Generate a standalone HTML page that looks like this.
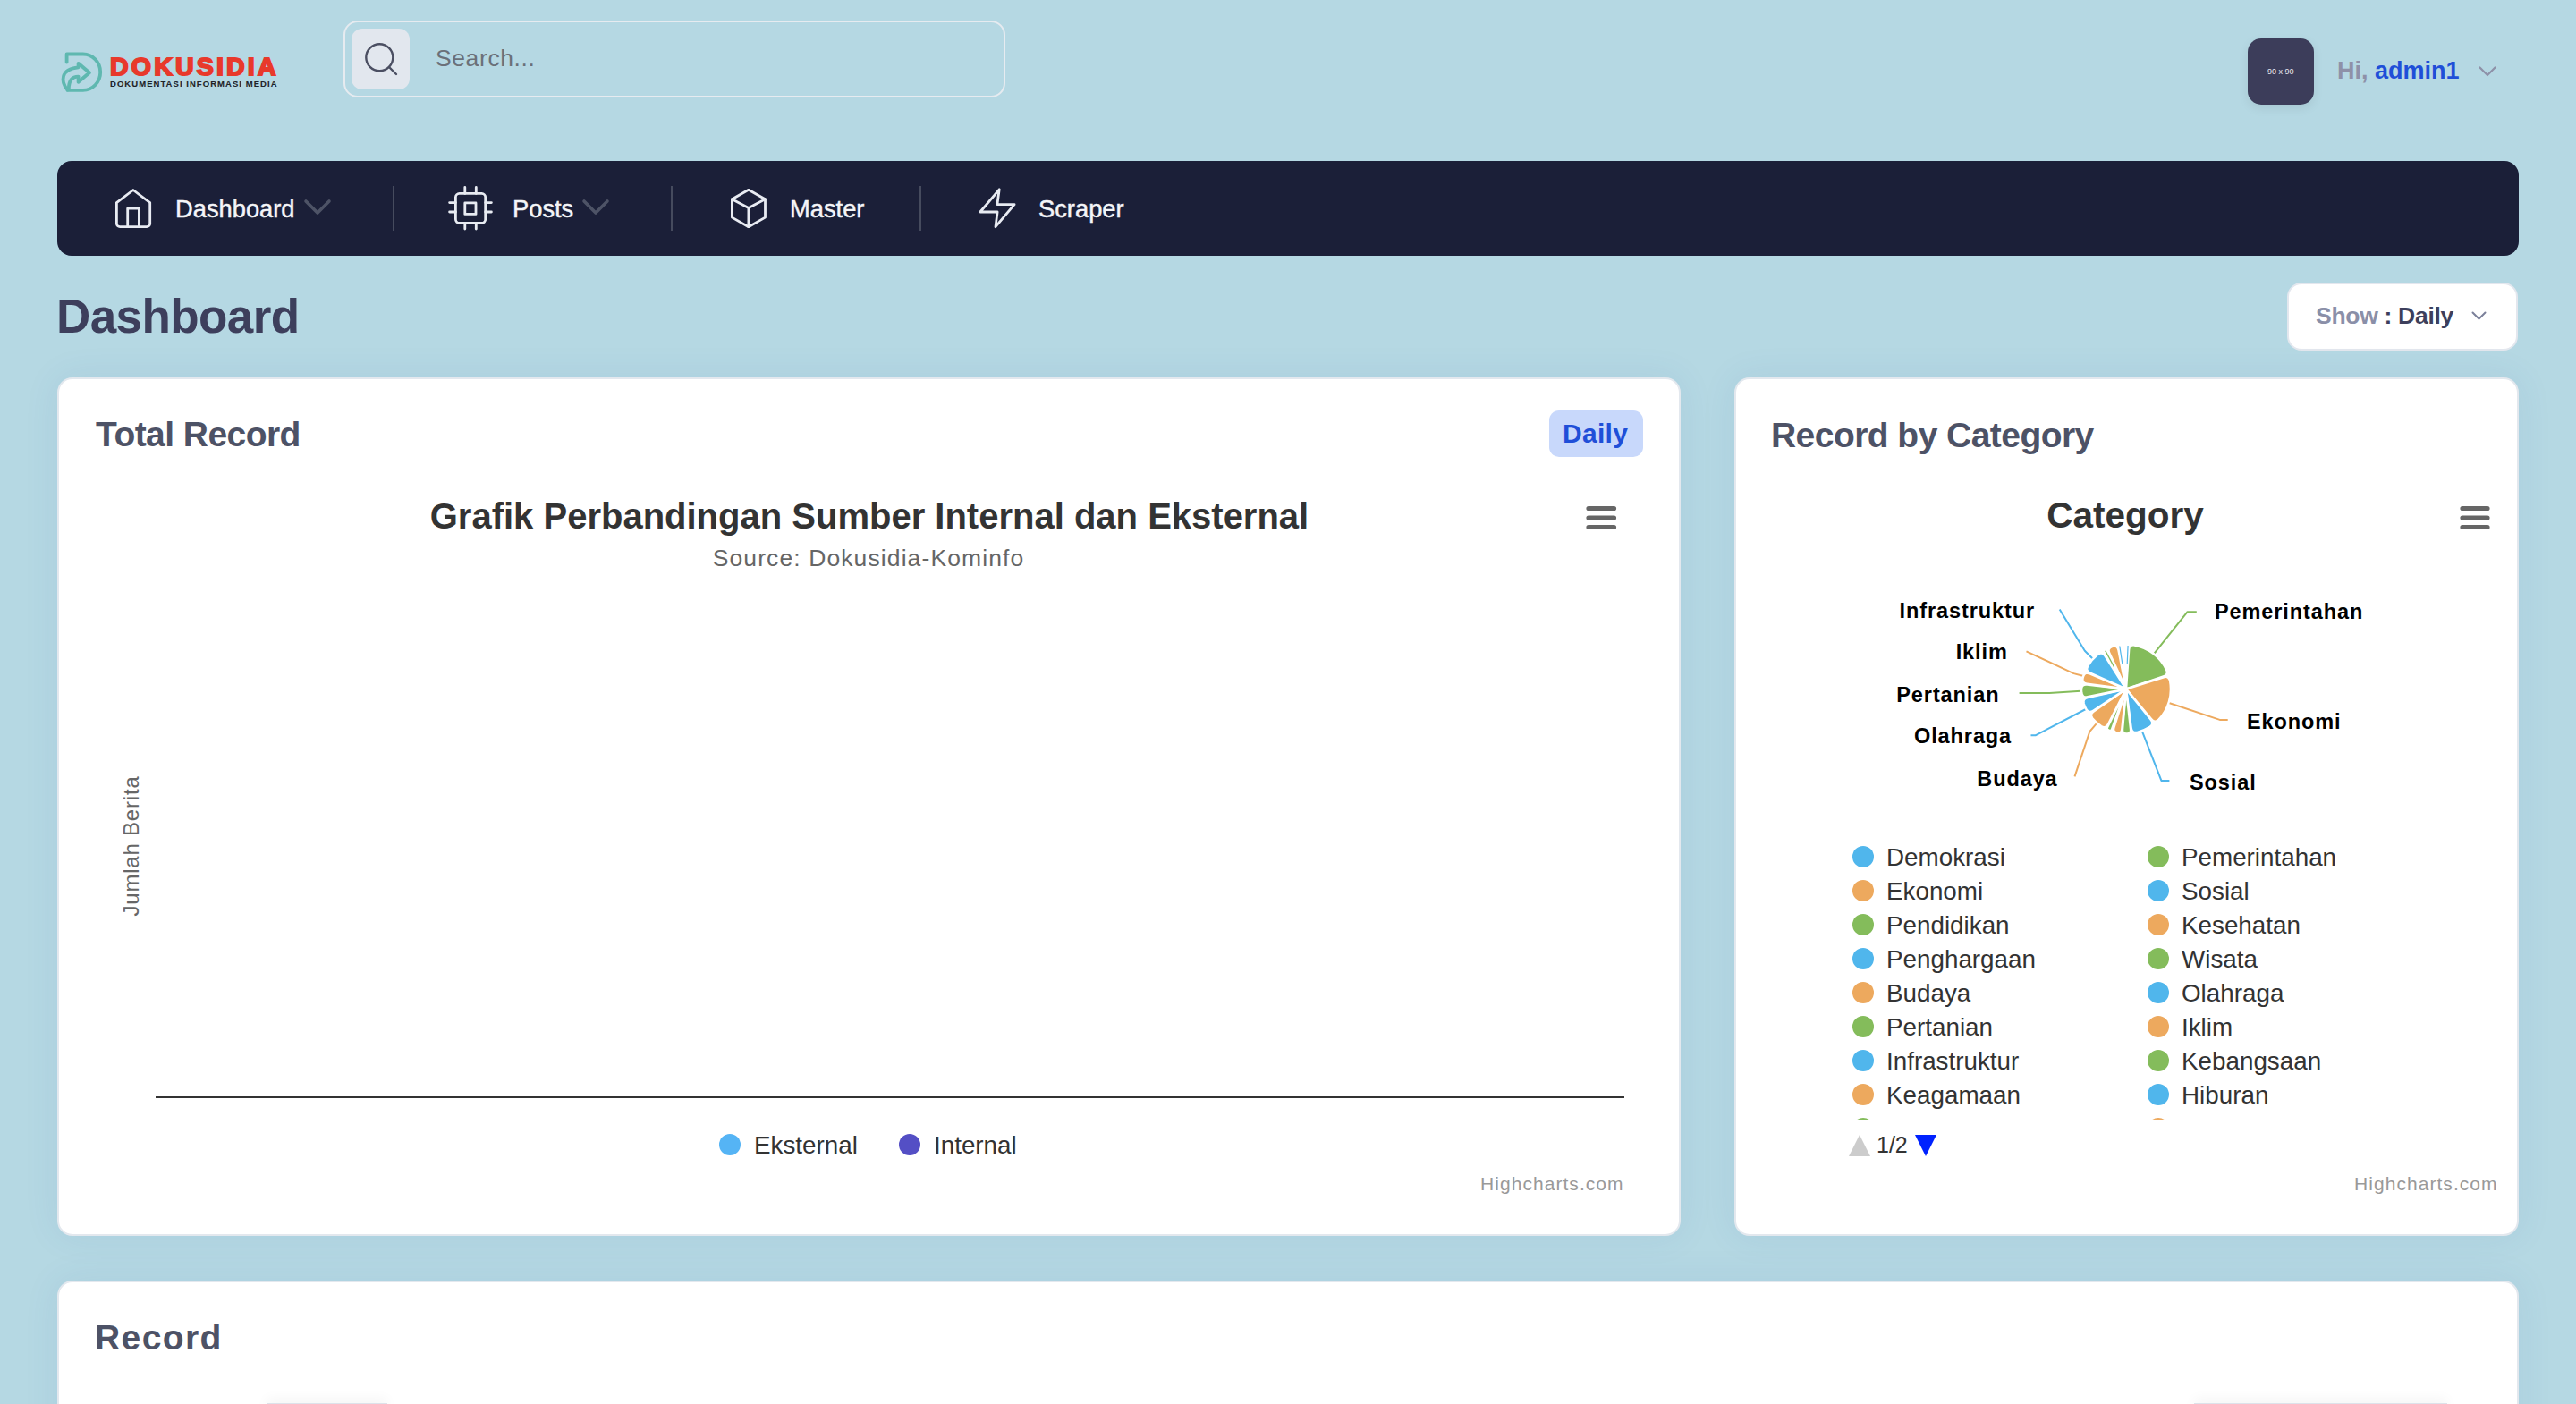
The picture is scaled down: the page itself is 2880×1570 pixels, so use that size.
<!DOCTYPE html>
<html><head><meta charset="utf-8"><title>Dashboard</title>
<style>
html,body{margin:0;padding:0}
body{width:2880px;height:1570px;overflow:hidden;position:relative;background:#b5d8e3;font-family:"Liberation Sans",sans-serif}
.t{position:absolute;line-height:1;white-space:nowrap}
.b{font-weight:700}
.card{position:absolute;background:#fff;border:2px solid #e3e8ee;border-radius:17px;box-sizing:border-box;box-shadow:0 0 40px rgba(40,90,170,.08)}
svg{position:absolute;overflow:visible}
.nav-t{font-size:27.3px;color:#f4f5f8;top:220px;-webkit-text-stroke:0.45px #f4f5f8}
.sep{position:absolute;top:208px;width:2px;height:50px;background:#464b5e}
.lg{font-size:27.8px;color:#333}
.dot{position:absolute;width:24px;height:24px;border-radius:50%}
.pl{font-size:23.5px;font-weight:700;color:#000;letter-spacing:0.9px}
@media (max-width:2000px){html{zoom:0.5}}
</style></head>
<body>

<!-- ===== HEADER ===== -->
<svg style="left:0;top:0" width="200" height="140" viewBox="0 0 200 140">
  <g fill="none" stroke="#5fb8b0" stroke-width="3.8" stroke-linecap="round" stroke-linejoin="round">
    <path d="M74.6 69.5V60.5H92.8A19.4 20.2 0 0 1 92.8 100.9H75.5"/>
    <path d="M75.5 100.6C68 92 67 77 87.6 75.3V70.8L100 81.3L87.6 91.7V85.6C80 85.6 76.8 91 76.8 99.8"/>
  </g>
</svg>
<div class="t b" style="left:123px;top:60.3px;font-size:28.5px;color:#e8392b;letter-spacing:3.2px;-webkit-text-stroke:2px #e8392b">DOKUSIDIA</div>
<div class="t b" style="left:123px;top:89.4px;font-size:9.5px;color:#1f2328;letter-spacing:1.05px;-webkit-text-stroke:0.1px #1f2328">DOKUMENTASI INFORMASI MEDIA</div>

<div style="position:absolute;left:384px;top:23px;width:740px;height:86px;box-sizing:border-box;border:2px solid #e6ebf0;border-radius:16px"></div>
<div style="position:absolute;left:393px;top:32px;width:65px;height:68px;background:#e2e7ee;border-radius:12px"></div>
<svg style="left:0;top:0" width="500" height="120">
  <g fill="none" stroke="#4b4f62" stroke-width="2.4" stroke-linecap="round">
    <circle cx="424.3" cy="64.3" r="15"/>
    <path d="M435 75L443 83"/>
  </g>
</svg>
<div class="t" style="left:487px;top:52px;font-size:26.5px;color:#6b7079;letter-spacing:0.6px">Search...</div>

<div style="position:absolute;left:2513px;top:43px;width:74px;height:74px;background:#3c3d5a;border-radius:15px;box-shadow:0 4px 12px rgba(0,0,0,.08)"></div>
<div class="t" style="left:2535px;top:76px;font-size:9px;color:#e8e8f0">90 x 90</div>
<div class="t b" style="left:2613px;top:65.5px;font-size:27px;color:#8e91a8">Hi, <span style="color:#1f4fd8">admin1</span></div>
<svg style="left:0;top:0" width="2880" height="140">
  <path d="M2772.5 75.5L2781 84L2789.5 75.5" fill="none" stroke="#8e91a8" stroke-width="2.2" stroke-linecap="round" stroke-linejoin="round"/>
</svg>

<!-- ===== NAVBAR ===== -->
<div style="position:absolute;left:64px;top:180px;width:2752px;height:106px;background:#1b1f38;border-radius:16px"></div>
<svg style="left:0;top:0" width="1300" height="300">
  <g fill="none" stroke="#e8ebf2" stroke-width="2.8" stroke-linecap="round" stroke-linejoin="round">
    <!-- home -->
    <path d="M130.4 226.6L148.9 212.5L167.7 226.6V250A3.7 3.7 0 0 1 164 253.7H134.1A3.7 3.7 0 0 1 130.4 250Z"/>
    <path d="M142.7 253.7V233.1H155.4V253.7"/>
    <!-- cpu -->
    <rect x="509.4" y="216.4" width="33.3" height="33.1" rx="4.2"/>
    <rect x="519.8" y="226.9" width="12.2" height="12.5"/>
    <path d="M519.8 209.5V216.4M532.3 209.5V216.4M519.8 249.5V256M532.3 249.5V256M502.6 226.6H509.4M502.6 237H509.4M542.7 226.6H549.4M542.7 237H549.4"/>
    <!-- cube -->
    <path d="M836.9 212.3L855.5 222.7V243.1L836.9 253.7L818.4 243.1V222.7Z"/>
    <path d="M818.4 222.7L836.9 232.4L855.5 222.7M836.9 232.4V253.7"/>
    <!-- bolt -->
    <path d="M1117.2 211.8L1114.9 228.7H1134.1L1113 253.7L1115.1 237H1095.9Z"/>
  </g>
  <g fill="none" stroke="#4e5366" stroke-width="3.6" stroke-linecap="round" stroke-linejoin="round">
    <path d="M342 225L355 238L368 225"/>
    <path d="M653 225L666 238L679 225"/>
  </g>
</svg>
<div class="t nav-t" style="left:196px">Dashboard</div>
<div class="sep" style="left:439px"></div>
<div class="t nav-t" style="left:573px">Posts</div>
<div class="sep" style="left:750px"></div>
<div class="t nav-t" style="left:883px">Master</div>
<div class="sep" style="left:1028px"></div>
<div class="t nav-t" style="left:1161px">Scraper</div>

<!-- ===== TITLE ROW ===== -->
<div class="t b" style="left:63px;top:327px;font-size:53px;color:#3d3f5c;letter-spacing:-0.6px">Dashboard</div>
<div style="position:absolute;left:2557px;top:316px;width:258px;height:76px;box-sizing:border-box;background:#fff;border:2px solid #e3e7ee;border-radius:16px"></div>
<div class="t b" style="left:2589px;top:339.5px;font-size:26.5px;color:#8a8fa8;letter-spacing:-0.3px">Show <span style="color:#3d3f5c">: Daily</span></div>
<svg style="left:0;top:0" width="2880" height="400">
  <path d="M2764.5 349.5L2771.5 356.5L2778.5 349.5" fill="none" stroke="#7b809a" stroke-width="2" stroke-linecap="round" stroke-linejoin="round"/>
</svg>

<!-- ===== CARD 1 ===== -->
<div class="card" style="left:64px;top:422px;width:1815px;height:960px"></div>
<div class="t b" style="left:107px;top:465.9px;font-size:39px;color:#4d5266;letter-spacing:-0.55px">Total Record</div>
<div style="position:absolute;left:1732px;top:459px;width:105px;height:52px;background:#c8d8fb;border-radius:11px"></div>
<div class="t b" style="left:1747px;top:469.7px;font-size:30px;color:#1f4fd8;letter-spacing:0.3px">Daily</div>
<div class="t b" style="left:472px;width:1000px;text-align:center;top:556.7px;font-size:40px;color:#333">Grafik Perbandingan Sumber Internal dan Eksternal</div>
<div class="t" style="left:671px;width:600px;text-align:center;top:611.3px;font-size:26.5px;color:#666;letter-spacing:1.1px">Source: Dokusidia-Kominfo</div>
<svg style="left:0;top:0" width="2880" height="1400">
  <g stroke="#666" stroke-width="5.2" stroke-linecap="round">
    <path d="M1776 568.5H1804.5M1776 579H1804.5M1776 589.5H1804.5"/>
  </g>
  <path d="M174 1227H1816" stroke="#333" stroke-width="2.2"/>
</svg>
<div class="t" style="left:146.5px;top:946px;font-size:24px;color:#666;letter-spacing:0.8px;transform:translate(-50%,-50%) rotate(-90deg)">Jumlah Berita</div>
<div class="dot" style="left:804px;top:1268px;background:#55b4f5"></div>
<div class="t lg" style="left:843px;top:1266.7px">Eksternal</div>
<div class="dot" style="left:1005px;top:1268px;background:#544fc5"></div>
<div class="t lg" style="left:1044px;top:1266.7px">Internal</div>
<div class="t" style="left:1655px;top:1313.2px;font-size:21px;color:#999;letter-spacing:1.05px">Highcharts.com</div>

<!-- ===== CARD 2 ===== -->
<div class="card" style="left:1939px;top:422px;width:877px;height:960px"></div>
<div class="t b" style="left:1980px;top:467px;font-size:39px;color:#4d5266;letter-spacing:-0.55px">Record by Category</div>
<div class="t b" style="left:2176px;width:400px;text-align:center;top:555.6px;font-size:40.5px;color:#333">Category</div>
<svg style="left:0;top:0" width="2880" height="700"><path d="M2753 568.5H2781M2753 579H2781M2753 589.5H2781" stroke="#666" stroke-width="5.2" stroke-linecap="round"/></svg>

<svg style="left:0;top:0" width="2880" height="1400">
  <g fill="none" stroke-width="2" stroke-linejoin="round">
    <path d="M2302.7 681.5L2330.8 727.7L2339.8 736.7" stroke="#50b6ec"/>
    <path d="M2265.5 728.4L2318.4 753.1L2328.5 755.8" stroke="#eda95e"/>
    <path d="M2257.6 775L2291.4 775L2326.3 772.7" stroke="#84bc5b"/>
    <path d="M2270.5 822.3L2275.6 822.3L2331.9 793" stroke="#50b6ec"/>
    <path d="M2319.5 868.4L2336.4 817.8L2344.3 808.7" stroke="#eda95e"/>
    <path d="M2395 817.8L2416.4 872.9L2425.4 872.9" stroke="#50b6ec"/>
    <path d="M2424.2 785.8L2481.7 804.9L2490.7 804.9" stroke="#eda95e"/>
    <path d="M2408.5 730.6L2445.6 684.2L2455.8 684.2" stroke="#84bc5b"/>
  </g>
  <g stroke="#fff" stroke-width="2.5" stroke-linejoin="round">
<path d="M2377 770.5L2377.3 721.2Q2377.3 720.5 2377.9 720.5A50 50 0 0 1 2378.8 720.5Q2379.4 720.6 2379.4 721.2Z" fill="#50b6ec"/>
<path d="M2377 770.5L2380.1 726.6Q2380.5 720.6 2386.4 721.4A50 50 0 0 1 2422.2 749.1Q2424.4 754.6 2418.7 756.5Z" fill="#84bc5b"/>
<path d="M2377 770.5L2419.0 757.3Q2424.7 755.5 2426.1 761.3A50 50 0 0 1 2413.5 804.7Q2409.1 808.8 2405.3 804.2Z" fill="#eda95e"/>
<path d="M2377 770.5L2404.7 804.7Q2408.5 809.4 2403.6 812.8A50 50 0 0 1 2389.4 818.9Q2383.5 820.1 2382.7 814.1Z" fill="#50b6ec"/>
<path d="M2377 770.5L2382.1 815.6Q2382.7 820.2 2378.1 820.5A50 50 0 0 1 2377.2 820.5Q2372.6 820.3 2373.0 815.7Z" fill="#84bc5b"/>
<path d="M2377 770.5L2372.3 815.7Q2371.8 820.2 2367.2 819.5A50 50 0 0 1 2366.4 819.4Q2362.0 818.2 2363.3 813.8Z" fill="#eda95e"/>
<path d="M2377 770.5L2361.1 815.4Q2360.3 817.6 2358.1 816.8A50 50 0 0 1 2357.3 816.4Q2355.1 815.4 2356.1 813.3Z" fill="#84bc5b"/>
<path d="M2377 770.5L2357.0 809.7Q2354.3 815.1 2349.1 812.0A50 50 0 0 1 2339.5 803.5Q2335.8 798.8 2340.7 795.4Z" fill="#eda95e"/>
<path d="M2377 770.5L2340.3 794.8Q2335.3 798.1 2332.3 792.9A50 50 0 0 1 2329.8 787.1Q2328.2 781.3 2334.0 780.0Z" fill="#50b6ec"/>
<path d="M2377 770.5L2333.9 779.3Q2328.0 780.5 2327.2 774.5A50 50 0 0 1 2327.0 770.8Q2327.3 764.8 2333.3 765.5Z" fill="#84bc5b"/>
<path d="M2377 770.5L2333.4 764.8Q2327.4 764.0 2328.6 758.1A50 50 0 0 1 2329.0 756.6Q2331.0 751.0 2336.5 753.3Z" fill="#eda95e"/>
<path d="M2377 770.5L2336.8 752.6Q2331.3 750.2 2334.1 744.8A50 50 0 0 1 2345.3 731.8Q2350.1 728.3 2353.4 733.4Z" fill="#50b6ec"/>
<path d="M2377 770.5L2352.2 728.4Q2351.6 727.4 2352.6 726.9A50 50 0 0 1 2353.3 726.5Q2354.3 725.9 2354.8 726.9Z" fill="#84bc5b"/>
<path d="M2377 770.5L2358.3 730.3Q2355.9 725.2 2361.1 723.1A50 50 0 0 1 2362.0 722.8Q2367.5 721.4 2368.5 727.0Z" fill="#eda95e"/>
<path d="M2377 770.5L2368.9 721.8Q2368.7 721.2 2369.4 721.1A50 50 0 0 1 2370.3 721.0Q2370.9 720.9 2371.0 721.5Z" fill="#50b6ec"/>
  </g>
<path d="M2378.2 742.5L2379.1 722.0" stroke="#50b6ec" stroke-width="1.2" fill="none"/>
<path d="M2372.9 742.8L2369.8 722.5" stroke="#50b6ec" stroke-width="1.2" fill="none"/>
<path d="M2363.6 745.9L2353.9 727.9" stroke="#84bc5b" stroke-width="1.2" fill="none"/>
  <path d="M2067 1293L2079 1269L2091 1293Z" fill="#ccc"/>
  <path d="M2141 1269L2165 1269L2153 1293Z" fill="#0022ff"/>
</svg>
<div class="t pl" style="left:2123.6px;top:672.0px">Infrastruktur</div>
<div class="t pl" style="left:2186.7px;top:717.5px">Iklim</div>
<div class="t pl" style="left:2120.3px;top:765.5px">Pertanian</div>
<div class="t pl" style="left:2140px;top:811.5px">Olahraga</div>
<div class="t pl" style="left:2210.3px;top:860.0px">Budaya</div>
<div class="t pl" style="left:2448px;top:863.5px">Sosial</div>
<div class="t pl" style="left:2512px;top:795.5px">Ekonomi</div>
<div class="t pl" style="left:2476px;top:673.2px">Pemerintahan</div>

<div style="position:absolute;left:2060px;top:935px;width:700px;height:317px;overflow:hidden">
  <div class="dot" style="left:11px;top:11px;background:#50b6ec"></div><div class="t lg" style="left:49px;top:10px">Demokrasi</div>
  <div class="dot" style="left:341px;top:11px;background:#84bc5b"></div><div class="t lg" style="left:379px;top:10px">Pemerintahan</div>
  <div class="dot" style="left:11px;top:49px;background:#eda95e"></div><div class="t lg" style="left:49px;top:48px">Ekonomi</div>
  <div class="dot" style="left:341px;top:49px;background:#50b6ec"></div><div class="t lg" style="left:379px;top:48px">Sosial</div>
  <div class="dot" style="left:11px;top:87px;background:#84bc5b"></div><div class="t lg" style="left:49px;top:86px">Pendidikan</div>
  <div class="dot" style="left:341px;top:87px;background:#eda95e"></div><div class="t lg" style="left:379px;top:86px">Kesehatan</div>
  <div class="dot" style="left:11px;top:125px;background:#50b6ec"></div><div class="t lg" style="left:49px;top:124px">Penghargaan</div>
  <div class="dot" style="left:341px;top:125px;background:#84bc5b"></div><div class="t lg" style="left:379px;top:124px">Wisata</div>
  <div class="dot" style="left:11px;top:163px;background:#eda95e"></div><div class="t lg" style="left:49px;top:162px">Budaya</div>
  <div class="dot" style="left:341px;top:163px;background:#50b6ec"></div><div class="t lg" style="left:379px;top:162px">Olahraga</div>
  <div class="dot" style="left:11px;top:201px;background:#84bc5b"></div><div class="t lg" style="left:49px;top:200px">Pertanian</div>
  <div class="dot" style="left:341px;top:201px;background:#eda95e"></div><div class="t lg" style="left:379px;top:200px">Iklim</div>
  <div class="dot" style="left:11px;top:239px;background:#50b6ec"></div><div class="t lg" style="left:49px;top:238px">Infrastruktur</div>
  <div class="dot" style="left:341px;top:239px;background:#84bc5b"></div><div class="t lg" style="left:379px;top:238px">Kebangsaan</div>
  <div class="dot" style="left:11px;top:277px;background:#eda95e"></div><div class="t lg" style="left:49px;top:276px">Keagamaan</div>
  <div class="dot" style="left:341px;top:277px;background:#50b6ec"></div><div class="t lg" style="left:379px;top:276px">Hiburan</div>
  <div class="dot" style="left:11px;top:315px;background:#84bc5b"></div>
  <div class="dot" style="left:341px;top:315px;background:#eda95e"></div>
</div>
<div class="t" style="left:2098px;top:1268.2px;font-size:25px;color:#333">1/2</div>
<div class="t" style="left:2632px;top:1313.2px;font-size:21px;color:#999;letter-spacing:1.05px">Highcharts.com</div>

<!-- ===== CARD 3 ===== -->
<div class="card" style="left:64px;top:1432px;width:2752px;height:400px"></div>
<div class="t b" style="left:106px;top:1476.3px;font-size:39px;color:#4d5266;letter-spacing:1.4px">Record</div>
<div style="position:absolute;left:298px;top:1569px;width:135px;height:10px;background:#fff;border-top:1px solid #dde2ea;box-shadow:0 -4px 14px rgba(0,0,0,.05)"></div>
<div style="position:absolute;left:2453px;top:1569px;width:283px;height:10px;background:#fff;border-top:1px solid #dde2ea;box-shadow:0 -4px 14px rgba(0,0,0,.05)"></div>

</body></html>
